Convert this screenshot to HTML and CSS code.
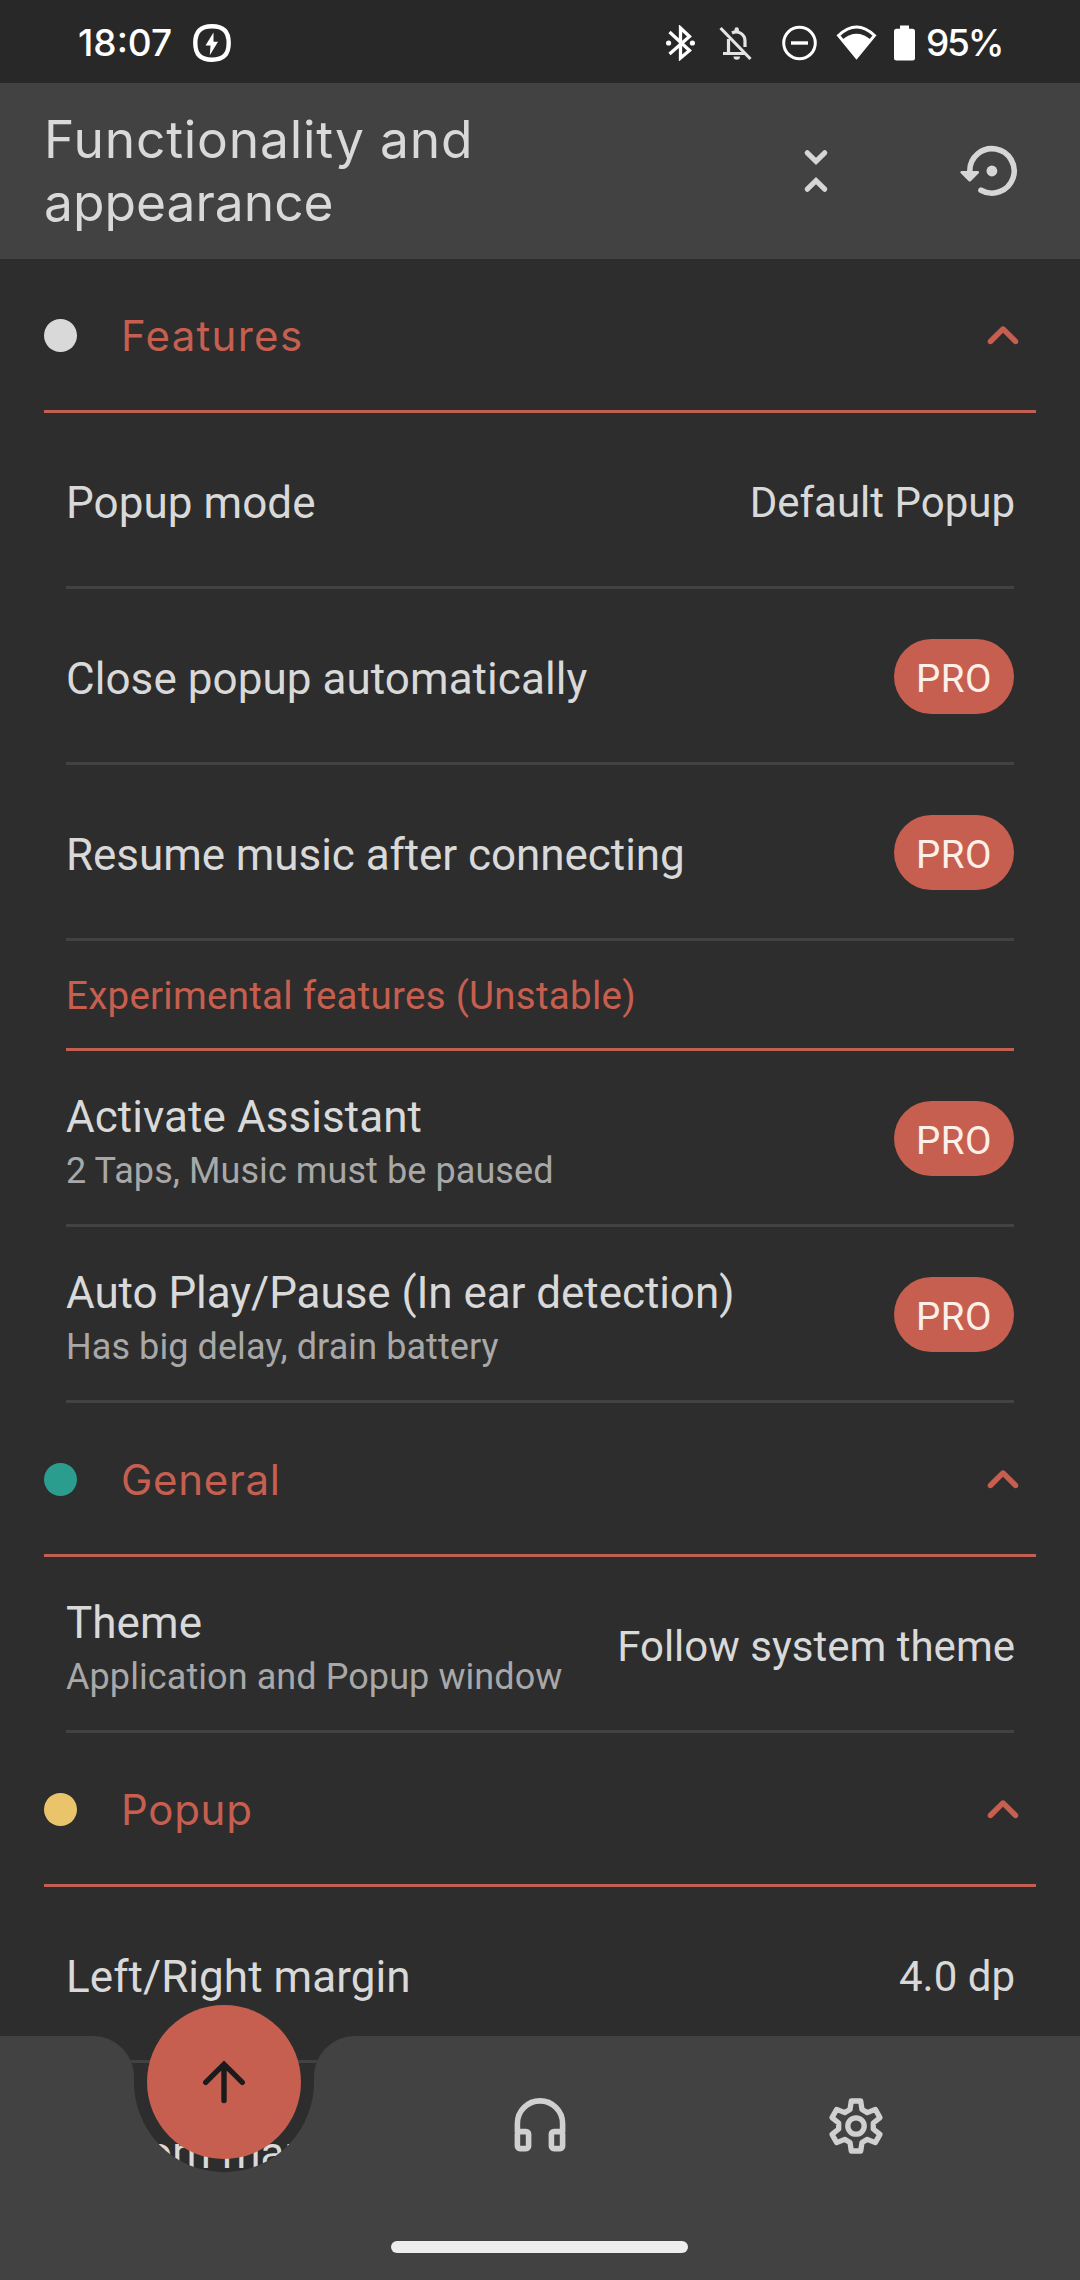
FILE: index.html
```
<!DOCTYPE html>
<html lang="en">
<head>
<meta charset="utf-8">
<title>Functionality and appearance</title>
<link rel="stylesheet" href="styles.css">
</head>
<body>
<svg width="0" height="0" class="defs">
  <symbol id="chevron" viewBox="0 0 24 24"><path d="M8.12 14.71L12 10.83l3.88 3.88c.39.39 1.02.39 1.41 0 .39-.39.39-1.02 0-1.41L12.7 8.71c-.39-.39-1.02-.39-1.41 0L6.7 13.3c-.39.39-.39 1.02 0 1.41.39.38 1.03.39 1.42 0z"/></symbol>
</svg>
<div class="screen">
  <header class="status">
    <span class="clock">18:07</span>
    <svg class="charge" width="38" height="38" viewBox="0 0 38 38"><path d="M19 2.3C30.5 2.3 35.7 7.5 35.7 19S30.5 35.7 19 35.7 2.3 30.5 2.3 19 7.5 2.3 19 2.3z" fill="none" stroke="#fff" stroke-width="4.4"/><path d="M20.5 8.500L12.5 21.500h5L16.800 31.300 25 17.800h-4.500z" fill="#fff"/></svg>
    <div class="indicators">
      <svg width="29" height="36" viewBox="0 0 29 36"><path d="M3.500 7l20 18.500L14.500 33V3l9 8.500L3.500 29" fill="none" stroke="#fff" stroke-width="3.300"/><circle cx="2.600" cy="18" r="2.600" fill="#fff"/><circle cx="26.400" cy="18" r="2.600" fill="#fff"/></svg>
      <svg class="bell" width="33" height="36" viewBox="0 0 33 36" fill="none" stroke="#e4e4e4" stroke-width="3.200"><path d="M1.500 3L31.500 34M4 28.500h22M9.500 28V14M13 8c6-3 13 1 13 8v6"/><path d="M14.500 31.500h6.500a3.200 3.200 0 0 1-6.500 0zM15.500 6V4.500a2.200 2.200 0 0 1 4.400 0V6z" fill="#e4e4e4" stroke="none"/></svg>
      <svg class="dnd" width="35" height="36" viewBox="0 0 35 36" fill="none" stroke="#fff" stroke-width="3"><circle cx="17.500" cy="18" r="15.800"/><path d="M9 18h17" stroke-width="3.400"/></svg>
      <svg class="wifi" width="41" height="36" viewBox="0 0 41 36"><path d="M2.500 10.500Q20.500-6.500 38.500 10.500L20.500 32.500z" fill="none" stroke="#fff" stroke-width="3"/><path d="M6.500 14.500Q20.500 3 34.500 14.500L20.500 34z" fill="#fff"/></svg>
      <svg class="battery" width="21" height="36" viewBox="0 0 21 36"><path d="M6 .5h9v3.300h3.500A2.500 2.500 0 0 1 21 6.300V33a2.500 2.500 0 0 1-2.500 2.500h-16A2.500 2.500 0 0 1 0 33V6.300a2.500 2.500 0 0 1 2.500-2.500H6z" fill="#fff"/></svg>
      <span class="percent">95%</span>
    </div>
  </header>

  <div class="appbar">
    <h1 class="title"><span class="title-a">Functionality and</span><span class="title-b">appearance</span></h1>
    <svg class="tool" viewBox="0 0 66 66" fill="none" stroke="#d6d6d6" stroke-width="5.200" stroke-linecap="round"><path d="M24.300 14.800L33 23.300l8.700-8.500M24.300 51.200L33 42.700l8.700 8.500"/></svg>
    <svg class="tool" viewBox="0 0 66 66"><path d="M12.800 34v-1A22.200 22.200 0 1 1 24 52.200" fill="none" stroke="#d6d6d6" stroke-width="5.600" stroke-linecap="round"/><path d="M4.800 33h15.800c1.500 0 1.900 1.300 1.100 2.200l-7.700 7.700c-.8.8-1.700.8-2.500 0l-7.700-7.700c-.9-.9-.5-2.200 1-2.200z" fill="#d6d6d6"/><circle cx="34.900" cy="33" r="5.400" fill="#d6d6d6"/></svg>
  </div>

  <main class="list">
    <div class="section"><i class="dot white"></i><h2>Features</h2><svg class="chev"><use href="#chevron"/></svg></div>
    <div class="row"><span class="label">Popup mode</span><span class="value">Default Popup</span></div>
    <div class="row"><span class="label">Close popup automatically</span><span class="pro">PRO</span></div>
    <div class="row"><span class="label snug">Resume music after connecting</span><span class="pro">PRO</span></div>
    <h3 class="subsection">Experimental features (Unstable)</h3>
    <div class="row"><div class="stack"><span>Activate Assistant</span><small>2 Taps, Music must be paused</small></div><span class="pro">PRO</span></div>
    <div class="row"><div class="stack"><span class="snug">Auto Play/Pause (In ear detection)</span><small>Has big delay, drain battery</small></div><span class="pro">PRO</span></div>

    <div class="section"><i class="dot green"></i><h2 class="tight">General</h2><svg class="chev"><use href="#chevron"/></svg></div>
    <div class="row"><div class="stack"><span>Theme</span><small>Application and Popup window</small></div><span class="value">Follow system theme</span></div>

    <div class="section"><i class="dot yellow"></i><h2 class="tight">Popup</h2><svg class="chev"><use href="#chevron"/></svg></div>
    <div class="row"><span class="label">Left/Right margin</span><span class="value">4.0 dp</span></div>
    <div class="row"><span class="label">Bottom margin</span></div>
  </main>

  <nav class="nav">
    <svg class="nav-shape" viewBox="0 0 1080 244"><path d="M0 0H93A41 41 0 0 1 134.070 42.600A90 90 0 1 0 313.930 42.600A41 41 0 0 1 355 0H1080V244H0z" fill="#424242"/></svg>
    <button class="fab"><svg width="66" height="66" viewBox="0 0 66 66" fill="none" stroke="#1b1b1b" stroke-width="5.400" stroke-linecap="round"><path d="M33 17v34.500M14.700 33.300L33 15.200l18.300 18.100"/></svg></button>
    <div class="nav-items">
      <svg width="66" height="66" viewBox="0 0 66 66" fill="none" stroke="#d0d0d0" stroke-width="5.600" stroke-linejoin="round"><path d="M10.400 39V30.500a22.600 22.600 0 0 1 45.200 0V39"/><rect x="10.400" y="38.600" width="11.200" height="17" rx="2.500"/><rect x="44.400" y="38.600" width="11.200" height="17" rx="2.500"/></svg>
      <svg width="66" height="66" viewBox="-33 -33 66 66" fill="none" stroke="#d0d0d0" stroke-width="5.300" stroke-linejoin="round"><path d="M-4.700-25H4.700L6-16.500 11.300-13.400 19.300-16.600 24-8.400 17.300-3.050V3.050L24 8.400 19.300 16.600 11.300 13.400 6 16.500 4.700 25H-4.700L-6 16.500-11.300 13.400-19.300 16.600-24 8.400-17.300 3.050V-3.050L-24-8.400-19.300-16.600-11.300-13.400-6-16.500z"/><circle r="8.200"/></svg>
    </div>
    <div class="home"></div>
  </nav>
</div>
</body>
</html>
```
FILE: styles.css
```
* { box-sizing: border-box; }
body { margin: 0; background: #2d2d2d; }
.defs { position: absolute; }
.screen {
  position: relative;
  display: flex;
  flex-direction: column;
  width: 1080px;
  height: 2280px;
  overflow: hidden;
  color: #d9d9d9;
  font-family: Roboto, sans-serif;
}

.status {
  flex: none;
  display: flex;
  align-items: center;
  height: 83px;
  padding: 3px 78px 0 78px;
  background: #282828;
  color: #fff;
  font: 500 37px/40px Inter, sans-serif;
}
.clock { width: 115px; letter-spacing: 0; }
.indicators { display: flex; align-items: center; margin-left: auto; }
.bell { margin-left: 24px; }
.dnd { margin-left: 30px; }
.wifi { margin-left: 19px; }
.battery { margin-left: 17px; }
.percent { width: 76px; margin-left: 11px; letter-spacing: -2.2px; }

.appbar {
  flex: none;
  display: flex;
  align-items: center;
  height: 176px;
  padding: 0 57px 0 44px;
  background: #424242;
  gap: 108px;
}
.title {
  flex: 1;
  display: flex;
  flex-direction: column;
  margin: 0;
  font: 400 51.5px/63px Inter, sans-serif;
  white-space: nowrap;
}
.title-a { letter-spacing: .8px; }
.title-b { letter-spacing: 0; }
.tool { width: 66px; height: 66px; flex: none; }

.list { flex: 1; min-height: 0; overflow: hidden; }
.section {
  display: flex;
  align-items: center;
  height: 154px;
  margin: 0 44px;
  padding-top: 2px;
  border-bottom: 3px solid #c05f52;
  color: #c65f4f;
}
.section h2 {
  flex: 1;
  margin: 0 0 0 44px;
  font: 400 42px/50px Inter, sans-serif;
  letter-spacing: 1.3px;
}
.section .tight { letter-spacing: .7px; }
.dot { width: 33px; height: 33px; border-radius: 50%; }
.white { background: #d9d9d9; }
.green { background: #2a9d8f; }
.yellow { background: #e9c46a; }
.chev { width: 66px; height: 66px; fill: #c65f4f; }

.row {
  display: flex;
  align-items: center;
  justify-content: space-between;
  height: 176px;
  margin: 0 66px;
  padding-top: 2px;
  border-bottom: 3px solid #424242;
  font-size: 44px;
  line-height: 56px;
  letter-spacing: .06px;
  white-space: nowrap;
}
.label { padding-top: 5px; }
.snug { letter-spacing: -.06px; }
.value { padding-top: 4px; margin-right: -1px; font-size: 42px; letter-spacing: 0; }
.stack { display: flex; flex-direction: column; gap: 2px; padding-top: 7px; }
.stack small { font-size: 36px; line-height: 48px; letter-spacing: .08px; color: #a8a8a8; }
.pro {
  display: flex;
  justify-content: center;
  width: 120px;
  height: 75px;
  padding-top: 5px;
  border-radius: 38px;
  background: #c65f4f;
  color: #fdf0e9;
  font-size: 38.5px;
  line-height: 70px;
  letter-spacing: .5px;
}
.subsection {
  height: 110px;
  margin: 0 66px;
  padding-top: 1px;
  border-bottom: 3px solid #c05f52;
  color: #c65f4f;
  font-weight: 400;
  font-size: 38.5px;
  line-height: 107px;
  letter-spacing: .26px;
}

.nav { position: absolute; left: 0; bottom: 0; width: 1080px; height: 244px; }
.nav-shape { position: absolute; inset: 0; width: 1080px; height: 244px; }
.fab {
  position: absolute;
  left: 147px;
  top: -31px;
  display: flex;
  align-items: center;
  justify-content: center;
  width: 154px;
  height: 154px;
  padding: 0;
  border: 0;
  border-radius: 50%;
  background: #c65f4f;
}
.nav-items { position: relative; display: flex; gap: 250px; padding: 57px 0 0 507px; }
.home {
  position: relative;
  width: 297px;
  height: 12px;
  margin: 82px 0 0 391px;
  border-radius: 6px;
  background: #eee;
}
```
